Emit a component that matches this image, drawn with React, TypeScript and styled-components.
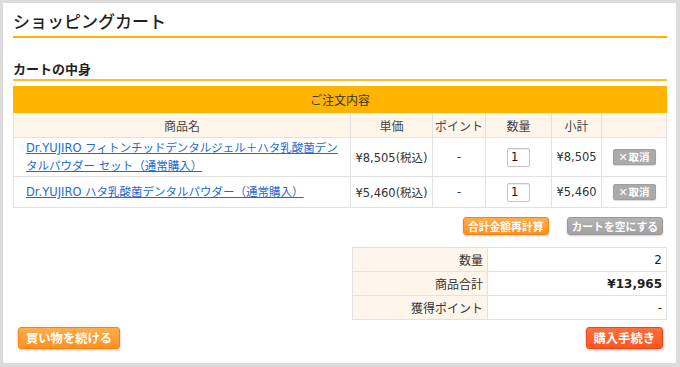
import styled, { createGlobalStyle } from "styled-components";

const GlobalStyle = createGlobalStyle`
  html, body {
    margin: 0;
    padding: 0;
    background: #dcdcdc;
  }
  body {
    font-family: "DejaVu Sans", "Noto Sans CJK JP", sans-serif;
    color: #333;
  }
`;

type Item = {
  name: string;
  price: string;
  point: string;
  qty: number;
  subtotal: string;
};

const items: Item[] = [
  {
    name: "Dr.YUJIRO フィトンチッドデンタルジェル＋ハタ乳酸菌デンタルパウダー セット（通常購入）",
    price: "¥8,505(税込)",
    point: "-",
    qty: 1,
    subtotal: "¥8,505",
  },
  {
    name: "Dr.YUJIRO ハタ乳酸菌デンタルパウダー（通常購入）",
    price: "¥5,460(税込)",
    point: "-",
    qty: 1,
    subtotal: "¥5,460",
  },
];

export default function App() {
  return (
    <>
      <GlobalStyle />
      <Page>
        <Title>ショッピングカート</Title>
        <SectionTitle>カートの中身</SectionTitle>

        <CartTable>
          <colgroup>
            <col style={{ width: 337 }} />
            <col style={{ width: 82 }} />
            <col style={{ width: 53 }} />
            <col style={{ width: 66 }} />
            <col style={{ width: 50 }} />
            <col />
          </colgroup>
          <thead>
            <tr>
              <OrderHead colSpan={6}>ご注文内容</OrderHead>
            </tr>
            <tr>
              <ColHead>商品名</ColHead>
              <ColHead>単価</ColHead>
              <ColHead>ポイント</ColHead>
              <ColHead>数量</ColHead>
              <ColHead>小計</ColHead>
              <ColHead />
            </tr>
          </thead>
          <tbody>
            {items.map((item) => (
              <ItemRow key={item.name}>
                <NameCell>
                  <ProductLink href="#">{item.name}</ProductLink>
                </NameCell>
                <Cell>{item.price}</Cell>
                <Cell>{item.point}</Cell>
                <Cell>
                  <QtyInput type="text" defaultValue={item.qty} />
                </Cell>
                <Cell>{item.subtotal}</Cell>
                <Cell>
                  <CancelButton type="button">
                    <CrossMark>✕</CrossMark>取消
                  </CancelButton>
                </Cell>
              </ItemRow>
            ))}
          </tbody>
        </CartTable>

        <Actions>
          <SmallButton type="button" $tone="orange">
            合計金額再計算
          </SmallButton>
          <SmallButton type="button" $tone="grey">
            カートを空にする
          </SmallButton>
        </Actions>

        <SummaryTable>
          <tbody>
            <tr>
              <SummaryLabel>数量</SummaryLabel>
              <SummaryValue>2</SummaryValue>
            </tr>
            <tr>
              <SummaryLabel>商品合計</SummaryLabel>
              <SummaryValue $strong>¥13,965</SummaryValue>
            </tr>
            <tr>
              <SummaryLabel>獲得ポイント</SummaryLabel>
              <SummaryValue>-</SummaryValue>
            </tr>
          </tbody>
        </SummaryTable>

        <Footer>
          <BigButton type="button" $tone="orange">
            買い物を続ける
          </BigButton>
          <BigButton type="button" $tone="red">
            購入手続き
          </BigButton>
        </Footer>
      </Page>
    </>
  );
}

const tones = {
  orange: {
    top: "#ffad4d",
    bottom: "#ff8f1f",
    border: "#f28512",
  },
  grey: {
    top: "#b3b3b3",
    bottom: "#a2a2a2",
    border: "#999",
  },
  red: {
    top: "#ff6f3d",
    bottom: "#ff5420",
    border: "#ee4a18",
  },
};

type Tone = keyof typeof tones;

const Page = styled.div`
  box-sizing: border-box;
  margin: 3px 4px 0 3px;
  height: 360px;
  background: #fff;
  padding: 5px 9px 0 10px;
`;

const Title = styled.h1`
  margin: 0;
  padding: 0 0 2px;
  font-family: "Noto Sans CJK JP", sans-serif;
  font-size: 17px;
  line-height: 26px;
  font-weight: 500;
  color: #222;
  border-bottom: 2px solid #ffb000;
`;

const SectionTitle = styled.h2`
  margin: 20px 0 0;
  padding: 0;
  font-family: "Noto Sans CJK JP", sans-serif;
  font-size: 13px;
  line-height: 21px;
  font-weight: 700;
  color: #222;
  border-bottom: 2px solid #ffbd2e;
`;

const CartTable = styled.table`
  margin-top: 5px;
  width: 100%;
  border-collapse: collapse;
  table-layout: fixed;
  font-size: 11.5px;
  border: 1px solid #e2e2e2;
`;

const OrderHead = styled.th`
  height: 25px;
  padding: 0;
  background: #ffb400;
  border: 1px solid #ffb400;
  font-family: "Noto Sans CJK JP", sans-serif;
  font-weight: 400;
  font-size: 12px;
  color: #333;
`;

const ColHead = styled.th`
  height: 24px;
  padding: 0;
  background: #fff5ea;
  border: 1px solid #e2e2e2;
  font-family: "Noto Sans CJK JP", sans-serif;
  font-weight: 400;
  font-size: 12px;
  color: #444;
`;

const ItemRow = styled.tr`
  height: 31px;
`;

const Cell = styled.td`
  padding: 1px 2px;
  border: 1px solid #e2e2e2;
  text-align: center;
  vertical-align: middle;
  white-space: nowrap;
`;

const NameCell = styled(Cell)`
  padding: 1px 6px 1px 12px;
  text-align: left;
  white-space: normal;
  line-height: 18px;
`;

const ProductLink = styled.a`
  color: #1b6bd3;
  text-decoration: underline;
`;

const QtyInput = styled.input`
  box-sizing: border-box;
  width: 23px;
  height: 19px;
  padding: 0 3px;
  border: 1px solid #c4c4c4;
  border-radius: 2px;
  font-family: inherit;
  font-size: 11.5px;
  color: #111;
  box-shadow: inset 0 1px 1px rgba(0, 0, 0, 0.08);
`;

const CancelButton = styled.button`
  box-sizing: border-box;
  width: 43px;
  height: 16px;
  padding: 0;
  border: 1px solid #a0a0a0;
  border-radius: 2px;
  background: #aaa;
  color: #fff;
  font-family: "Noto Sans CJK JP", sans-serif;
  font-weight: 700;
  font-size: 10.5px;
  line-height: 14px;
  box-shadow: 0 1px 1px rgba(0, 0, 0, 0.15);
`;

const CrossMark = styled.span`
  font-family: "DejaVu Sans", sans-serif;
  font-size: 11px;
  margin-right: 1px;
`;

const Actions = styled.div`
  display: flex;
  justify-content: flex-end;
  gap: 18px;
  margin-top: 9px;
  padding-right: 4px;
`;

const SmallButton = styled.button<{ $tone: Tone }>`
  height: 18px;
  padding: 0 4px;
  border: 1px solid ${(p) => tones[p.$tone].border};
  border-radius: 3px;
  background: linear-gradient(
    ${(p) => tones[p.$tone].top},
    ${(p) => tones[p.$tone].bottom}
  );
  color: #fff;
  font-family: "Noto Sans CJK JP", sans-serif;
  font-weight: 700;
  font-size: 10.8px;
  line-height: 16px;
  box-shadow: 0 1px 2px rgba(0, 0, 0, 0.2);
`;

const SummaryTable = styled.table`
  margin: 12px 0 0 auto;
  width: 315px;
  border-collapse: collapse;
  border: 1px solid #e2e2e2;
  font-size: 12px;
`;

const SummaryLabel = styled.td`
  width: 126px;
  height: 23px;
  padding: 0 4px;
  background: #fff6eb;
  border: 1px solid #e2e2e2;
  text-align: right;
  font-family: "Noto Sans CJK JP", sans-serif;
  color: #333;
`;

const SummaryValue = styled.td<{ $strong?: boolean }>`
  padding: 0 4px;
  border: 1px solid #e2e2e2;
  text-align: right;
  font-weight: ${(p) => (p.$strong ? 700 : 400)};
  color: #222;
`;

const Footer = styled.div`
  display: flex;
  justify-content: space-between;
  margin-top: 7px;
  padding: 0 4px 0 5px;
`;

const BigButton = styled.button<{ $tone: Tone }>`
  height: 22px;
  padding: 0 7px;
  border: 1px solid ${(p) => tones[p.$tone].border};
  border-radius: 3px;
  background: linear-gradient(
    ${(p) => tones[p.$tone].top},
    ${(p) => tones[p.$tone].bottom}
  );
  color: #fff;
  font-family: "Noto Sans CJK JP", sans-serif;
  font-weight: 700;
  font-size: 12.3px;
  line-height: 20px;
  box-shadow: 0 1px 3px rgba(0, 0, 0, 0.25);
`;
